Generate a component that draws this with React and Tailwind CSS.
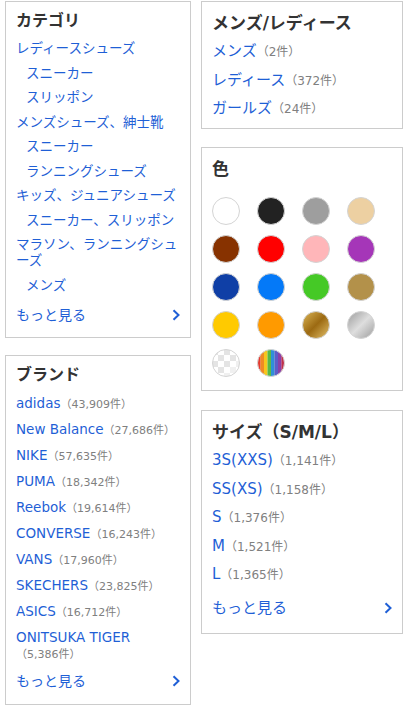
import React from "react";

const LINK = "text-[#1f5fd6]";
const COUNT = "text-[#808080]";

function Chevron() {
  return (
    <svg width="8" height="12" viewBox="0 0 8 12" className="shrink-0">
      <path d="M1.5 1.2l5 4.8-5 4.8" fill="none" stroke="#1f5fd6" strokeWidth="2" />
    </svg>
  );
}

function MoreLeft({ className }) {
  return (
    <div className={`flex items-center justify-between text-[14px] leading-[24px] ${LINK} ${className}`}>
      <span>もっと見る</span>
      <Chevron />
    </div>
  );
}

const categories = [
  { t: "レディースシューズ", i: false },
  { t: "スニーカー", i: true },
  { t: "スリッポン", i: true },
  { t: "メンズシューズ、紳士靴", i: false },
  { t: "スニーカー", i: true },
  { t: "ランニングシューズ", i: true },
  { t: "キッズ、ジュニアシューズ", i: false },
  { t: "スニーカー、スリッポン", i: true },
  { t: "marason", i: false },
  { t: "メンズ", i: true },
];

const brands = [
  ["adidas", "（43,909件）"],
  ["New Balance", "（27,686件）"],
  ["NIKE", "（57,635件）"],
  ["PUMA", "（18,342件）"],
  ["Reebok", "（19,614件）"],
  ["CONVERSE", "（16,243件）"],
  ["VANS", "（17,960件）"],
  ["SKECHERS", "（23,825件）"],
  ["ASICS", "（16,712件）"],
  ["ONITSUKA TIGER", "（5,386件）"],
];

const genders = [
  ["メンズ", "（2件）"],
  ["レディース", "（372件）"],
  ["ガールズ", "（24件）"],
];

const sizes = [
  ["3S(XXS)", "（1,141件）"],
  ["SS(XS)", "（1,158件）"],
  ["S", "（1,376件）"],
  ["M", "（1,521件）"],
  ["L", "（1,365件）"],
];

const solid = [
  "#ffffff",
  "#222222",
  "#9e9e9e",
  "#edd0a2",
  "#873200",
  "#ff0000",
  "#ffb6b9",
  "#a536b8",
  "#0f3fa6",
  "#0479f8",
  "#45c926",
  "#b3914a",
  "#ffca00",
  "#ff9a00",
];

function GradientSwatch({ id, stops }) {
  return (
    <svg width="28" height="28" viewBox="0 0 28 28">
      <defs>
        <linearGradient id={id} x1="0" y1="0" x2="1" y2="1">
          {stops.map(([o, c]) => (
            <stop key={o} offset={o} stopColor={c} />
          ))}
        </linearGradient>
      </defs>
      <circle cx="14" cy="14" r="13.5" fill={`url(#${id})`} stroke="#d4d4d4" />
    </svg>
  );
}

function CheckerSwatch() {
  const squares = [];
  for (let r = 0; r < 5; r++) {
    for (let c = 0; c < 5; c++) {
      if ((r + c) % 2 === 0) {
        squares.push(<rect key={`${r}-${c}`} x={c * 6} y={r * 6} width="6" height="6" fill={r + c < 5 ? "#e4e4e4" : "#f0f0f0"} />);
      }
    }
  }
  return (
    <svg width="28" height="28" viewBox="0 0 28 28">
      <defs>
        <clipPath id="chk">
          <circle cx="14" cy="14" r="13.5" />
        </clipPath>
      </defs>
      <circle cx="14" cy="14" r="13.5" fill="#ffffff" />
      <g clipPath="url(#chk)">{squares}</g>
      <circle cx="14" cy="14" r="13.5" fill="none" stroke="#d4d4d4" />
    </svg>
  );
}

function RainbowSwatch() {
  const cols = ["#e53a2f", "#f08a24", "#f6c61e", "#58b947", "#2f8fd8", "#5b5fc7", "#8a3fa8", "#c0304a"];
  return (
    <svg width="28" height="28" viewBox="0 0 28 28">
      <defs>
        <clipPath id="rb">
          <circle cx="14" cy="14" r="13.5" />
        </clipPath>
      </defs>
      <g clipPath="url(#rb)">
        {cols.map((c, i) => (
          <rect key={i} x={i * 3.5} y="0" width="3.6" height="28" fill={c} />
        ))}
      </g>
      <circle cx="14" cy="14" r="13.5" fill="none" stroke="#d4d4d4" />
    </svg>
  );
}

export default function App() {
  return (
    <div className="[font-family:'DejaVu_Sans','Noto_Sans_CJK_JP',sans-serif] bg-white min-h-[709px] flex items-start gap-[10px] px-[5px] pt-px">
      {/* left column */}
      <div className="w-[186px] flex flex-col">
        <section className="border border-[#cccccc] px-[10px] pt-[7px] pb-[10px]">
          <h2 className="text-[16px] leading-[24px] font-bold text-[#333333] mb-[3px]">カテゴリ</h2>
          <ul>
            {categories.map((c, idx) => (
              <li key={idx} className={`text-[13.5px] leading-[16px] py-[4.25px] ${c.i ? "pl-[10px]" : ""} ${LINK}`}>
                {c.t === "marason" ? (
                  <>
                    マラソン、ランニングシュ
                    <br />
                    ーズ
                  </>
                ) : (
                  c.t
                )}
              </li>
            ))}
          </ul>
          <MoreLeft className="mt-[6px]" />
        </section>

        <section className="mt-[17px] border border-[#cccccc] px-[10px] pt-[7px] pb-[11px]">
          <h2 className="text-[16px] leading-[24px] font-bold text-[#333333] mb-[3px]">ブランド</h2>
          <ul>
            {brands.map(([n, c]) => (
              <li key={n} className={`text-[13.5px] leading-[16px] py-[5px] ${LINK}`}>
                <span className="whitespace-nowrap">{n}</span>
                <wbr />
                <span className={`whitespace-nowrap text-[11px] leading-[11px] ${COUNT}`}>{c}</span>
              </li>
            ))}
          </ul>
          <MoreLeft className="mt-[3px]" />
        </section>
      </div>

      {/* right column */}
      <div className="w-[202px] flex flex-col">
        <section className="border border-[#cccccc] px-[10px] pt-[9px] pb-[5px]">
          <h2 className="text-[17px] leading-[24px] font-bold text-[#333333] mb-[2px]">メンズ/レディース</h2>
          <ul>
            {genders.map(([n, c]) => (
              <li key={n} className={`text-[15px] leading-[20px] py-[4.25px] ${LINK}`}>
                <span>{n}</span>
                <span className={`text-[12px] leading-[12px] ${COUNT}`}>{c}</span>
              </li>
            ))}
          </ul>
        </section>

        <section className="mt-[18.5px] border border-[#cccccc] px-[10px] pt-[9px] pb-[13.5px]">
          <h2 className="text-[17px] leading-[24px] font-bold text-[#333333] mb-[2px]">色</h2>
          <div className="pt-[13.5px] grid grid-cols-[repeat(4,28px)] gap-x-[17px] gap-y-[10px]">
            {solid.map((c, i) => (
              <div
                key={i}
                className="w-[28px] h-[28px] rounded-full border border-[#d4d4d4]"
                style={{ backgroundColor: c }}
              />
            ))}
            <GradientSwatch
              id="gold"
              stops={[
                ["0", "#dcb656"],
                ["0.5", "#9c6a12"],
                ["1", "#e4c26c"],
              ]}
            />
            <GradientSwatch
              id="silver"
              stops={[
                ["0", "#9a9a9a"],
                ["0.5", "#dedede"],
                ["1", "#9c9c9c"],
              ]}
            />
            <CheckerSwatch />
            <RainbowSwatch />
          </div>
        </section>

        <section className="mt-[19px] border border-[#cccccc] px-[10px] pt-[9px] pb-[12.5px]">
          <h2 className="text-[17px] leading-[24px] font-bold text-[#333333] mb-[2px]">サイズ（S/M/L）</h2>
          <ul>
            {sizes.map(([n, c]) => (
              <li key={n} className={`text-[15px] leading-[20px] py-[4.25px] ${LINK}`}>
                <span>{n}</span>
                <span className={`text-[12px] leading-[12px] ${COUNT}`}>{c}</span>
              </li>
            ))}
          </ul>
          <div className={`mt-[7.5px] flex items-center justify-between text-[15px] leading-[24px] ${LINK}`}>
            <span>もっと見る</span>
            <Chevron />
          </div>
        </section>
      </div>
    </div>
  );
}
